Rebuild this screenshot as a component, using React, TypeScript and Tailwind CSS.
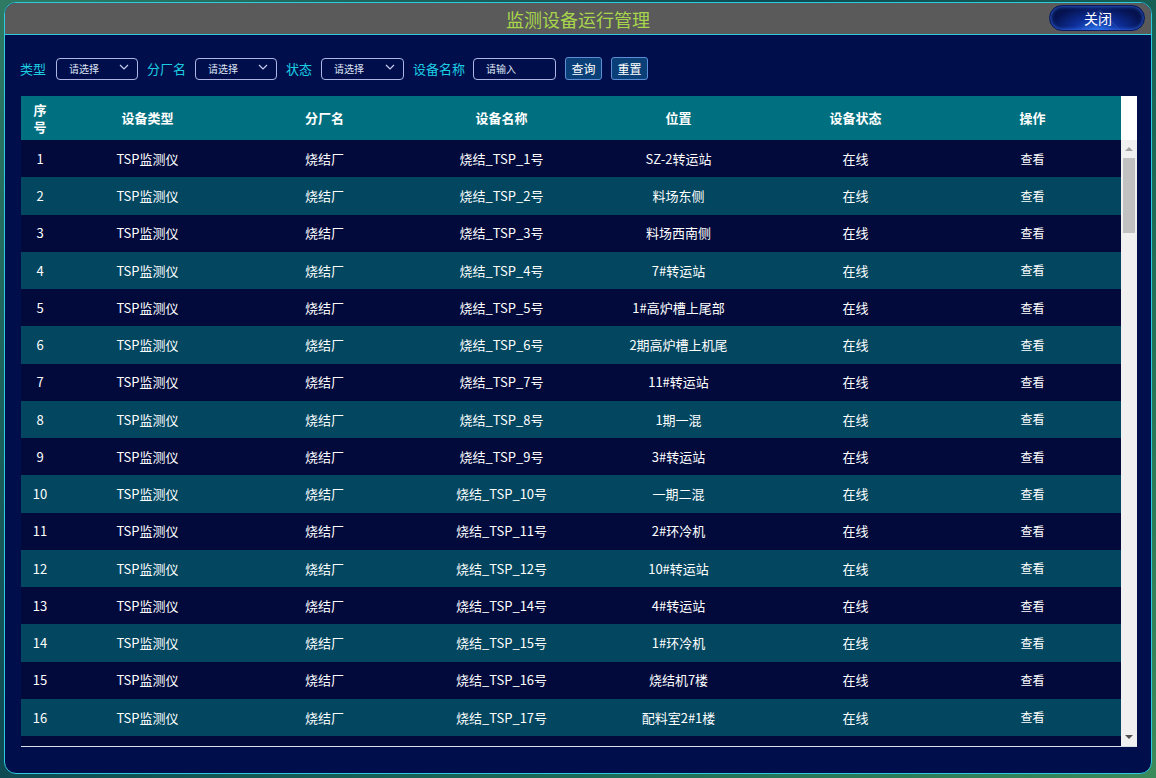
import React from "react";

const rows: [string, string][] = [
  ["烧结_TSP_1号", "SZ-2转运站"],
  ["烧结_TSP_2号", "料场东侧"],
  ["烧结_TSP_3号", "料场西南侧"],
  ["烧结_TSP_4号", "7#转运站"],
  ["烧结_TSP_5号", "1#高炉槽上尾部"],
  ["烧结_TSP_6号", "2期高炉槽上机尾"],
  ["烧结_TSP_7号", "11#转运站"],
  ["烧结_TSP_8号", "1期一混"],
  ["烧结_TSP_9号", "3#转运站"],
  ["烧结_TSP_10号", "一期二混"],
  ["烧结_TSP_11号", "2#环冷机"],
  ["烧结_TSP_12号", "10#转运站"],
  ["烧结_TSP_14号", "4#转运站"],
  ["烧结_TSP_15号", "1#环冷机"],
  ["烧结_TSP_16号", "烧结机7楼"],
  ["烧结_TSP_17号", "配料室2#1楼"],
];

const font = { fontFamily: '"Microsoft YaHei", "Noto Sans CJK SC", "Noto Sans", sans-serif' };

function Chevron() {
  return (
    <svg width="10" height="6" viewBox="0 0 10 6" className="absolute right-[8px] top-[5px]">
      <polyline points="1,1 5,5 9,1" fill="none" stroke="#c8cdf0" strokeWidth="1.2" />
    </svg>
  );
}

function Select({ w }: { w: string }) {
  return (
    <div className={`relative ${w} h-[22px] border border-[#aeb6e6] rounded-[4px] flex items-center pl-[12px] text-[10px] text-[#dfe3f5]`}>
      请选择
      <Chevron />
    </div>
  );
}

function Btn({ t }: { t: string }) {
  return (
    <div className="ml-[9px] w-[37px] h-[23px] border border-[#5d8fd6] rounded-[3px] bg-[#0b3f78] flex items-center justify-center text-[12px] text-white">
      {t}
    </div>
  );
}

export default function App() {
  return (
    <div
      className="w-[1156px] h-[778px] pt-[2px] pl-[4px] pr-[4px] pb-[4px] bg-[linear-gradient(135deg,#2f7a63,#0e4a52_40%,#1c6a55_70%,#3a8a5a)]"
      style={font}
    >
      <div className="w-[1148px] h-[772px] border border-[#2ccbe0] rounded-[12px] overflow-hidden bg-[#000f4c] flex flex-col">
        <div className="relative h-[32px] bg-[#5a5a5b] border-b border-[#35c8dc] flex items-center justify-center shrink-0">
          <span className="text-[18px] text-[#a8d64a] leading-none">监测设备运行管理</span>
          <div className="absolute right-[6px] top-[2px] w-[96px] h-[26px] rounded-full border border-[#0a1a60] bg-[radial-gradient(ellipse_at_50%_100%,#2a6fe0_0%,#0e2f9a_35%,#061454_70%,#040c3a_100%)] shadow-[inset_0_0_4px_#3a7cff] flex items-center justify-center overflow-hidden">
            <svg className="absolute inset-0" width="96" height="26" viewBox="0 0 96 26">
              <line x1="30" y1="26" x2="50" y2="4" stroke="#3b5fb8" strokeWidth="0.8" opacity="0.6" />
              <line x1="50" y1="4" x2="72" y2="26" stroke="#3b5fb8" strokeWidth="0.8" opacity="0.6" />
            </svg>
            <span className="relative text-[14px] text-white ml-[2px]">关闭</span>
          </div>
        </div>

        <div className="flex flex-col pl-[16px] pr-[14px]">
          <div className="mt-[22px] -ml-[1px] flex items-center h-[23px] text-[13px] text-[#1ccde2]">
            <span className="w-[36px]">类型</span>
            <Select w="w-[82px]" />
            <span className="ml-[9px] w-[48px]">分厂名</span>
            <Select w="w-[82px]" />
            <span className="ml-[9px] w-[35px]">状态</span>
            <Select w="w-[83px]" />
            <span className="ml-[9px] w-[60px]">设备名称</span>
            <div className="w-[83px] h-[22px] border border-[#aeb6e6] rounded-[4px] flex items-center pl-[12px] text-[10px] text-[#dfe3f5]">
              请输入
            </div>
            <Btn t="查询" />
            <Btn t="重置" />
          </div>

          <div className="mt-[16px] w-[1116px] flex flex-col">
            <div className="flex h-[44px]">
              <div className="w-[1100px] bg-[#007080] flex text-[13px] font-bold text-white">
                <div className="w-[38px] flex items-center justify-center text-center leading-[17px]">
                  序<br />号
                </div>
                {["设备类型", "分厂名", "设备名称", "位置", "设备状态", "操作"].map((h) => (
                  <div key={h} className="w-[177px] flex items-center justify-center">{h}</div>
                ))}
              </div>
              <div className="w-[16px] bg-white" />
            </div>
            <div className="flex h-[607px] border-b border-[#d8dde8]">
              <div className="w-[1100px] overflow-hidden bg-[#020a3c]">
                {rows.map((r, i) => (
                  <div
                    key={i}
                    className={`flex h-[37.25px] text-[13px] text-white ${i % 2 === 0 ? "bg-[#020a3c]" : "bg-[#02465f]"}`}
                  >
                    <div className="w-[38px] flex items-center justify-center">{i + 1}</div>
                    <div className="w-[177px] flex items-center justify-center">TSP监测仪</div>
                    <div className="w-[177px] flex items-center justify-center">烧结厂</div>
                    <div className="w-[177px] flex items-center justify-center">{r[0]}</div>
                    <div className="w-[177px] flex items-center justify-center">{r[1]}</div>
                    <div className="w-[177px] flex items-center justify-center">在线</div>
                    <div className="w-[177px] flex items-center justify-center text-[12px]">查看</div>
                  </div>
                ))}
              </div>
              <div className="w-[16px] bg-[#f0f0f0] flex flex-col items-center">
                <svg width="16" height="17" viewBox="0 0 16 17" className="shrink-0">
                  <polygon points="4,11 8,7 12,11" fill="#a3a3a3" />
                </svg>
                <div className="w-[12px] h-[75px] bg-[#c1c1c1] mt-[1px]" />
                <div className="flex-1" />
                <svg width="16" height="17" viewBox="0 0 16 17" className="shrink-0">
                  <polygon points="4,6 8,10 12,6" fill="#505050" />
                </svg>
              </div>
            </div>
          </div>
        </div>
      </div>
    </div>
  );
}
